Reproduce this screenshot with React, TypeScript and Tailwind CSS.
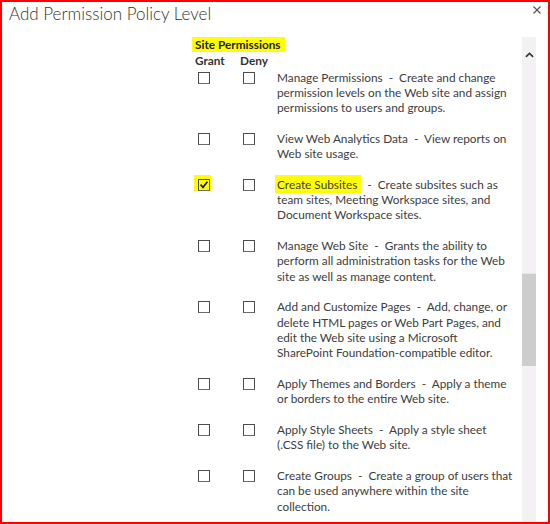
type Row = { lines: string[]; checked?: boolean; highlight?: string };

const rows: Row[] = [
  {
    lines: [
      "Manage Permissions  -  Create and change",
      "permission levels on the Web site and assign",
      "permissions to users and groups.",
    ],
  },
  {
    lines: ["View Web Analytics Data  -  View reports on", "Web site usage."],
  },
  {
    checked: true,
    highlight: "Create Subsites",
    lines: [
      "  -  Create subsites such as",
      "team sites, Meeting Workspace sites, and",
      "Document Workspace sites.",
    ],
  },
  {
    lines: [
      "Manage Web Site  -  Grants the ability to",
      "perform all administration tasks for the Web",
      "site as well as manage content.",
    ],
  },
  {
    lines: [
      "Add and Customize Pages  -  Add, change, or",
      "delete HTML pages or Web Part Pages, and",
      "edit the Web site using a Microsoft",
      "SharePoint Foundation-compatible editor.",
    ],
  },
  {
    lines: ["Apply Themes and Borders  -  Apply a theme", "or borders to the entire Web site."],
  },
  {
    lines: ["Apply Style Sheets  -  Apply a style sheet", "(.CSS file) to the Web site."],
  },
  {
    lines: [
      "Create Groups  -  Create a group of users that",
      "can be used anywhere within the site",
      "collection.",
    ],
  },
];

function Box({ checked }: { checked?: boolean }) {
  return (
    <span className="relative block w-[12px] h-[12px] border border-[#4d4d4d] border-b-[#6a6a6a]">
      {checked && (
        <svg viewBox="0 0 10 10" className="absolute left-0 top-0 w-[10px] h-[10px]">
          <path d="M1.6 4.6 L4 7.4 L8.4 1.8" fill="none" stroke="#1e1e1e" strokeWidth="1.7" />
        </svg>
      )}
    </span>
  );
}

export default function App() {
  return (
    <div
      className="relative w-[550px] h-[524px] border-2 border-[#ff0000] bg-white flex flex-col overflow-hidden text-[#3d3d3d]"
      style={{ fontFamily: "Lato, 'Open Sans', sans-serif" }}
    >
      <div className="h-[35px] shrink-0 pl-[7px] pt-[2px] text-[17px] leading-[20px] font-light text-[#333]">
        Add Permission Policy Level
      </div>
      <button className="absolute right-[6px] top-[3px] w-[10px] h-[10px] flex items-center justify-center">
        <svg viewBox="0 0 10 10" className="w-[10px] h-[10px]">
          <path d="M1.5 1.5 L8.5 8.5 M8.5 1.5 L1.5 8.5" stroke="#555" strokeWidth="1.2" fill="none" />
        </svg>
      </button>

      <div className="flex flex-1 min-h-0">
        <div className="w-[190px] shrink-0" />
        <div className="flex-1 min-w-0 text-[11.8px]">
          <div className="h-[15px] leading-[15px]">
            <span className="inline-block w-[93px] h-[15px] pl-[3px] bg-[#ffff00] font-bold text-[#222]">
              Site Permissions
            </span>
          </div>
          <div className="mt-[1px] h-[15.33px] leading-[15.33px] flex pl-[3px] font-bold text-[#333]">
            <span className="w-[45px]">Grant</span>
            <span>Deny</span>
          </div>
          <div className="mt-[1.2px] flex flex-col gap-[15.33px] leading-[15.33px]">
            {rows.map((r, i) => (
              <div key={i} className="flex">
                <div className="w-[48px] shrink-0 pl-[6px] pt-[2px]">
                  {r.checked ? (
                    <span className="relative block w-[12px]">
                      <span className="absolute -left-[4px] -right-[1px] -top-[3.5px] -bottom-[0.5px] bg-[#ffff00]" />
                      <span className="relative block">
                        <Box checked />
                      </span>
                    </span>
                  ) : (
                    <Box />
                  )}
                </div>
                <div className="w-[37px] shrink-0 pl-[3px] pt-[2px]">
                  <Box />
                </div>
                <div className="flex-1 whitespace-pre">
                  {r.lines.map((l, j) => (
                    <div key={j}>
                      {j === 0 && r.highlight && (
                        <span className="-ml-[2px] pl-[2px] pr-[4px] py-[1.5px] bg-[#ffff00]">{r.highlight}</span>
                      )}
                      {l}
                    </div>
                  ))}
                </div>
              </div>
            ))}
          </div>
        </div>
        <div className="w-[14px] shrink-0 bg-[#f3f1f4] flex flex-col items-center">
          <svg viewBox="0 0 10 6" className="mt-[15px] w-[9px] h-[6px]">
            <path d="M1 5 L5 1.3 L9 5" fill="none" stroke="#333" strokeWidth="1.8" />
          </svg>
          <div className="mt-[215px] w-full h-[93px] bg-[#cdcdcd] border-t border-[#e6e6e6]" />
        </div>
        <div className="w-[12px] shrink-0" />
      </div>
    </div>
  );
}
